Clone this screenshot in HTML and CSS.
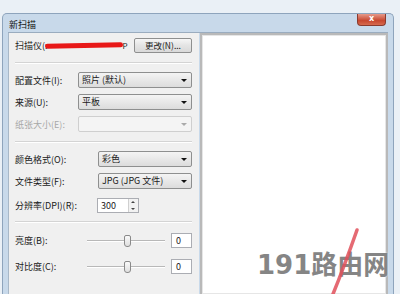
FILE: index.html
```html
<!DOCTYPE html>
<html>
<head>
<meta charset="utf-8">
<link rel="stylesheet" href="styles.css">
</head>
<body>
<div class="window">
  <div class="titlebar">
    <span class="title">新扫描</span>
    <span class="close">x</span>
  </div>
  <div class="client">
    <div class="panel">
      <div class="row scanner">
        <span class="lbl">扫描仪(:</span><span class="scribble"></span><span class="p">P</span>
        <span class="btn">更改(N)...</span>
      </div>
      <div class="sep first"></div>
      <div class="row r1"><span class="lbl">配置文件(I):</span><span class="sel w1">照片 (默认)<i class="arr"></i></span></div>
      <div class="row r2"><span class="lbl">来源(U):</span><span class="sel w1">平板<i class="arr"></i></span></div>
      <div class="row r2"><span class="lbl dis">纸张大小(E):</span><span class="sel w1 disabled"><i class="arr"></i></span></div>
      <div class="sep second"></div>
      <div class="row r1"><span class="lbl">颜色格式(O):</span><span class="sel w2">彩色<i class="arr"></i></span></div>
      <div class="row r2"><span class="lbl">文件类型(F):</span><span class="sel w2">JPG (JPG 文件)<i class="arr"></i></span></div>
      <div class="row r3"><span class="lbl">分辨率(DPI)(R):</span><span class="spin"><span class="num">300</span><span class="spinbtns"><i class="up"></i><i class="dn"></i></span></span></div>
      <div class="sep third"></div>
      <div class="row r4"><span class="lbl">亮度(B):</span><span class="slider"><span class="track"></span><span class="thumb"></span></span><span class="val">0</span></div>
      <div class="row r5"><span class="lbl">对比度(C):</span><span class="slider"><span class="track"></span><span class="thumb"></span></span><span class="val">0</span></div>
    </div>
    <div class="preview"></div>
  </div>
</div>
<div class="watermark">191路由网</div>
<svg class="stroke" width="60" height="80" viewBox="0 0 60 80"><path d="M37 2 C 30 22, 20 50, 8 78" stroke="#e0505a" stroke-width="3.5" fill="none" stroke-linecap="round" opacity="0.85"/></svg>
</body>
</html>
```
FILE: styles.css
```css
html, body { margin: 0; padding: 0; }
body {
  width: 400px; height: 294px; overflow: hidden;
  background: #eaf0f6;
  font-family: "Noto Sans CJK SC", "Liberation Sans", sans-serif;
  font-size: 9px; color: #1a1a1a;
  position: relative;
}
.window {
  margin: 13px 0 0 2px;
  width: 380px; height: 280px;
  background: #c8d9ea;
  border: 1px solid #8ea4bc; border-bottom: none;
  border-radius: 5px 5px 0 0;
  padding: 0 5px 0 5px;
}
.titlebar {
  height: 18px; position: relative;
  display: flex; align-items: center;
}
.title { padding-left: 1px; font-size: 9px; color: #111; margin-top: 2px; }
.close {
  position: absolute; right: 2px; top: 0;
  width: 27px; height: 11px;
  background: linear-gradient(#e69a8a, #c7472f 60%, #d66a4e);
  border: 1px solid #8a3a2e; border-top: none;
  border-radius: 0 0 4px 4px;
  color: #fff; font-size: 8px; line-height: 10px; text-align: center;
  font-family: "DejaVu Sans", sans-serif; font-weight: bold;
}
.client {
  display: flex; height: 261px;
  border-top: 1px solid #9aacbf;
}
.panel {
  width: 177px; background: #f0f0f0;
  padding: 5px 7px 0 6px;
  border-left: 1px solid #a8b8c8;
}
.preview {
  flex: 1; background: #fff;
  border: 2px solid #b9b9b9; border-bottom: none;
  box-shadow: inset 0 0 0 1px #e6e6e6;
  margin-left: 1px;
}
.row { display: flex; align-items: center; position: relative; }
.lbl { white-space: nowrap; }
.lbl.dis { color: #a8a8a8; }
.scanner { height: 15px; }
.scribble {
  display: inline-block; width: 78px; height: 5px;
  background: #e81818; border-radius: 3px; margin-left: -3px;
  transform: rotate(-1deg);
}
.p { font-size: 8px; }
.btn {
  margin-left: auto; width: 56px; height: 13px;
  border: 1px solid #8e8f8f; border-radius: 2px;
  background: linear-gradient(#f6f6f6, #e4e4e4 50%, #d9d9d9);
  text-align: center; line-height: 13px; font-size: 8.5px;
}
.sep { height: 1px; background: #d4d4d4; border-bottom: 1px solid #fff; }
.sep.first { margin-top: 9px; }
.sep.second { margin-top: 9px; }
.sep.third { margin-top: 8px; }
.r1 { margin-top: 8px; }
.r2 { margin-top: 6px; }
.r3 { margin-top: 9px; }
.r4 { margin-top: 10px; }
.r5 { margin-top: 11px; }
.sel {
  position: relative; box-sizing: border-box;
  height: 16px; line-height: 14px;
  border: 1px solid #8e8f8f; border-radius: 2px;
  background: linear-gradient(#f4f4f4, #e8e8e8 50%, #dcdcdc);
  padding-left: 3px; margin-left: auto;
}
.sel.w1 { width: 114px; }
.sel.w2 { width: 94px; }
.sel.disabled { background: #f4f4f4; border-color: #cfcfcf; }
.arr {
  position: absolute; right: 4px; top: 6px;
  width: 0; height: 0;
  border-left: 3px solid transparent; border-right: 3px solid transparent;
  border-top: 3px solid #111;
}
.disabled .arr { border-top-color: #aaa; }
.spin {
  margin-left: 20px; display: flex;
  height: 15px; box-sizing: border-box;
  border: 1px solid #abadb3; background: #fff; width: 42px;
}
.num { padding-left: 3px; line-height: 13px; flex: 1; }
.spinbtns {
  width: 9px; display: flex; flex-direction: column;
  border-left: 1px solid #d0d0d0; background: #f2f2f2;
}
.spinbtns i { flex: 1; position: relative; }
.spinbtns .up::after, .spinbtns .dn::after {
  content: ""; position: absolute; left: 2px; top: 2px;
  border-left: 2px solid transparent; border-right: 2px solid transparent;
}
.spinbtns .up::after { border-bottom: 2px solid #444; }
.spinbtns .dn::after { border-top: 2px solid #444; }
.slider { position: relative; width: 78px; height: 12px; margin-left: auto; margin-right: 6px; }
.track { position: absolute; left: 0; right: 0; top: 5px; height: 1px; background: #b8b8b8; border-bottom: 1px solid #fff; }
.thumb {
  position: absolute; left: 37px; top: 0; width: 5px; height: 10px;
  border: 1px solid #8a8a8a; border-radius: 2px 2px 3px 3px;
  background: linear-gradient(#fafafa, #dedede);
}
.val {
  width: 21px; height: 15px; box-sizing: border-box;
  border: 1px solid #abadb3; background: #fff;
  padding-left: 4px; line-height: 13px;
}
.watermark {
  position: absolute; left: 257px; top: 244px;
  font-family: "DejaVu Sans", "Noto Sans CJK SC", sans-serif;
  font-size: 26px; font-weight: bold; color: #858585;
  text-shadow: 0 0 2px #fff;
}
.stroke { position: absolute; left: 320px; top: 228px; }
```
